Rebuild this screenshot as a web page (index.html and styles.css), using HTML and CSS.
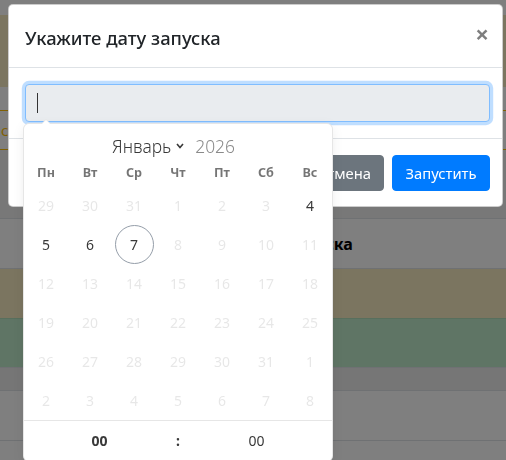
FILE: index.html
```html
<!DOCTYPE html>
<html lang="ru">
<head>
<meta charset="utf-8">
<title>Укажите дату запуска</title>
<link rel="stylesheet" href="styles.css">
</head>
<body>
<div class="page">
  <div class="pg-nav"></div>
  <div class="pg-alert"></div>
  <div class="pg-gap"></div>
  <div class="pg-btn">с</div>
  <div class="pg-band"></div>
  <div class="pg-table">
    <div class="tr thead"><div class="th">Дата запуска</div></div>
    <div class="tr row-warning"></div>
    <div class="tr row-success"></div>
    <div class="tr row-muted"></div>
    <div class="tr row-plain"></div>
    <div class="tr row-plain"></div>
  </div>
</div>
<div class="backdrop"></div>
<div class="modal">
  <div class="modal-header">
    <h5 class="modal-title">Укажите дату запуска</h5>
    <button class="close" type="button">×</button>
  </div>
  <div class="modal-body">
    <div class="date-input"><span class="caret"></span></div>
  </div>
  <div class="modal-footer">
    <button class="btn btn-secondary" type="button">Отмена</button>
    <button class="btn btn-primary" type="button">Запустить</button>
  </div>
</div>
<div class="fp">
  <div class="fp-months">
    <span class="fp-month">Январь</span>
    <svg class="fp-chev" width="8" height="6" viewBox="0 0 8 6"><polyline points="1,1 4,4.5 7,1" fill="none" stroke="#393939" stroke-width="1.6"/></svg>
    <span class="fp-year">2026</span>
  </div>
  <div class="fp-weekdays">
    <span>Пн</span><span>Вт</span><span>Ср</span><span>Чт</span><span>Пт</span><span>Сб</span><span>Вс</span>
  </div>
  <div class="fp-days">
    <span class="d off">29</span><span class="d off">30</span><span class="d off">31</span><span class="d off">1</span><span class="d off">2</span><span class="d off">3</span><span class="d">4</span>
    <span class="d">5</span><span class="d">6</span><span class="d today">7</span><span class="d off">8</span><span class="d off">9</span><span class="d off">10</span><span class="d off">11</span>
    <span class="d off">12</span><span class="d off">13</span><span class="d off">14</span><span class="d off">15</span><span class="d off">16</span><span class="d off">17</span><span class="d off">18</span>
    <span class="d off">19</span><span class="d off">20</span><span class="d off">21</span><span class="d off">22</span><span class="d off">23</span><span class="d off">24</span><span class="d off">25</span>
    <span class="d off">26</span><span class="d off">27</span><span class="d off">28</span><span class="d off">29</span><span class="d off">30</span><span class="d off">31</span><span class="d off">1</span>
    <span class="d off">2</span><span class="d off">3</span><span class="d off">4</span><span class="d off">5</span><span class="d off">6</span><span class="d off">7</span><span class="d off">8</span>
  </div>
  <div class="fp-time">
    <span class="fp-hh">00</span><span class="fp-sep">:</span><span class="fp-mm">00</span>
  </div>
</div>
</body>
</html>
```

FILE: styles.css
```css
* { box-sizing: border-box; }
html, body { margin: 0; padding: 0; }
body {
  width: 506px;
  height: 460px;
  overflow: hidden;
  position: relative;
  background: #fff;
  color: #212529;
  font-family: "Noto Sans", "Open Sans", sans-serif;
  font-size: 15px;
}

/* background page */
.pg-nav { height: 15px; }
.pg-alert { height: 72px; background: #f6eac0; }
.pg-gap { height: 23px; }
.pg-btn {
  height: 40px;
  border-top: 1px solid #ffc107;
  border-bottom: 1px solid #ffc107;
  color: #ffc107;
  line-height: 38px;
  padding-left: 1px;
}
.pg-band { height: 68px; background: #f0f0f0; }
.tr { border-top: 1px solid #dee2e6; }
.thead {
  height: 50px;
  display: flex;
  align-items: center;
  padding-left: 245px;
  font-size: 16px;
  font-weight: 700;
  color: #000;
}
.row-warning { height: 50px; background: #f6eac0; }
.row-success { height: 49px; background: #beeaca; border-top-color: #b1dfbb; }
.row-muted { height: 23px; background: #ececec; }
.row-plain { height: 50px; }

.backdrop {
  position: fixed;
  inset: 0;
  background: rgba(0, 0, 0, 0.5);
}

/* modal */
.modal {
  position: absolute;
  left: 8px;
  top: 4px;
  width: 495px;
  background: #fff;
  border: 1px solid rgba(0, 0, 0, 0.2);
  border-radius: 5px;
}
.modal-header {
  display: flex;
  align-items: flex-start;
  justify-content: space-between;
  padding: 16px 12px 16px 16px;
  border-bottom: 1px solid #dee2e6;
}
.modal-title {
  margin: 0;
  padding-top: 2px;
  height: 30px;
  font-size: 18.4px;
  line-height: 30px;
  font-weight: 500;
}
.close {
  margin: 1px 1px 0 0;
  padding: 0;
  border: 0;
  background: none;
  font-family: inherit;
  font-size: 24px;
  font-weight: 700;
  line-height: 1;
  color: #000;
  opacity: 0.5;
}
.modal-body { padding: 16px 12px 16px 16px; }
.date-input {
  height: 38px;
  display: flex;
  align-items: center;
  padding-left: 11px;
  background: #e9ecef;
  border: 1px solid #80bdff;
  border-radius: 4px;
  box-shadow: 0 0 0 3.2px rgba(0, 123, 255, 0.25);
}
.caret { width: 1px; height: 20px; background: #333; }
.modal-footer {
  display: flex;
  justify-content: flex-end;
  padding: 12px 8px 11px;
  border-top: 1px solid #dee2e6;
}
.btn {
  margin: 4px;
  padding: 6px 12px;
  border: 1px solid transparent;
  border-radius: 4px;
  font-family: inherit;
  font-size: 14.8px;
  line-height: 22px;
  color: #fff;
}
.btn-secondary { background: #6c757d; border-color: #6c757d; }
.btn-primary { background: #007bff; border-color: #007bff; min-width: 98px; }

/* flatpickr calendar */
.fp {
  position: absolute;
  left: 24px;
  top: 124px;
  width: 308px;
  height: 337px;
  background: #fff;
  border-radius: 5px;
  box-shadow: 1px 0 0 #e6e6e6, -1px 0 0 #e6e6e6, 0 1px 0 #e6e6e6, 0 -1px 0 #e6e6e6, 0 3px 13px rgba(0, 0, 0, 0.08);
  color: #393939;
  font-size: 14px;
}
.fp::before, .fp::after {
  content: "";
  position: absolute;
  left: 22px;
  width: 0;
  height: 0;
  border: solid transparent;
}
.fp::before { top: -10px; border-width: 5px; margin-left: -5px; border-bottom-color: #e6e6e6; }
.fp::after { top: -8px; border-width: 4px; margin-left: -4px; border-bottom-color: #fff; }
.fp-months {
  height: 34px;
  display: flex;
  align-items: center;
  padding: 9px 0 0 88px;
  font-size: 17.4px;
  font-weight: 300;
  line-height: 22px;
}
.fp-month { color: #393939; }
.fp-chev { margin-left: 5px; margin-top: 1px; }
.fp-year { margin-left: 11px; color: #8a8a8a; }
.fp-weekdays {
  height: 28px;
  display: grid;
  grid-template-columns: repeat(7, 1fr);
  align-items: center;
  text-align: center;
  font-size: 12.6px;
  font-weight: 700;
  color: rgba(0, 0, 0, 0.54);
}
.fp-days {
  display: grid;
  grid-template-columns: repeat(7, 1fr);
  justify-items: center;
}
.d {
  width: 39px;
  height: 39px;
  line-height: 37px;
  text-align: center;
  border: 1px solid transparent;
  border-radius: 50%;
  color: #393939;
}
.d.off { color: rgba(57, 57, 57, 0.12); }
.d.today { border-color: #959ea9; }
.fp-time {
  height: 41px;
  border-top: 1px solid #e6e6e6;
  display: grid;
  grid-template-columns: 49% 2% 49%;
  align-items: center;
  text-align: center;
  line-height: 40px;
}
.fp-hh { font-weight: 700; }
.fp-sep { font-weight: 700; }
```
